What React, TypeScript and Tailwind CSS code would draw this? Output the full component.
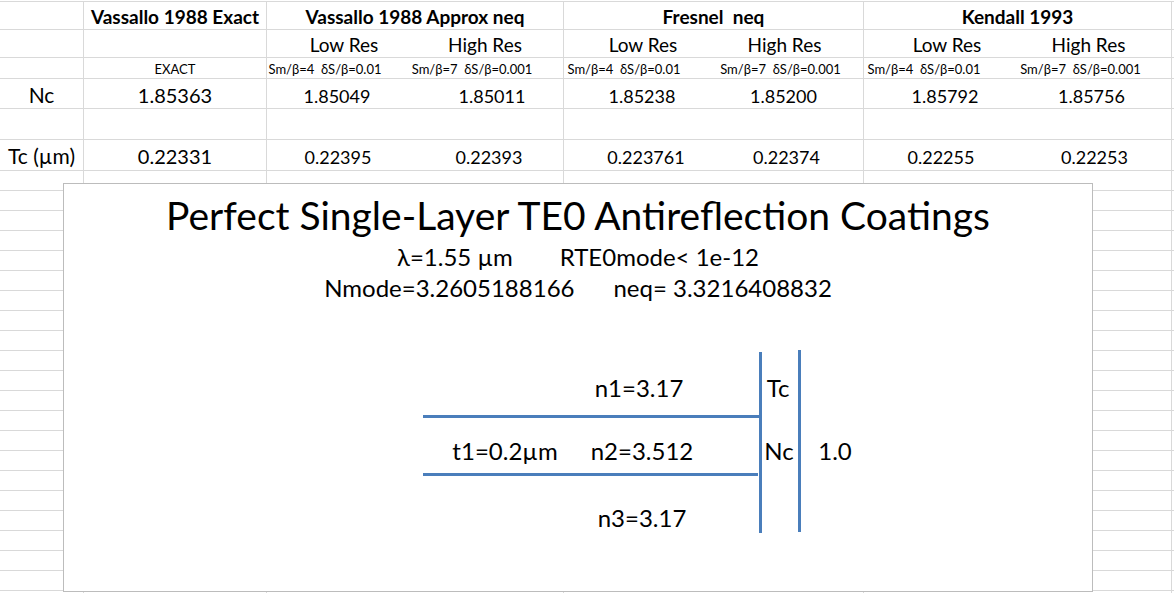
import React from 'react';

const line = 'border-[#d9d9d9]';

// widths of the sheet columns: label, exact, three method groups, sliver at the right edge
const colW = ['w-[84px]', 'w-[183px]', 'w-[297px]', 'w-[300px]', 'w-[308px]', 'w-[2px]'];
const halfW = [
  ['w-[148px]', 'w-[148px]'],
  ['w-[150px]', 'w-[149px]'],
  ['w-[154px]', 'w-[153px]'],
];

type Pair = [React.ReactNode, React.ReactNode, string?, string?];

const Row = ({
  h,
  pb = '',
  text = '',
  label,
  exact,
  groups,
  top = false,
}: {
  h: string;
  pb?: string;
  text?: string;
  label?: React.ReactNode;
  exact?: React.ReactNode;
  groups?: (Pair | React.ReactNode)[];
  top?: boolean;
}) => (
  <div className={`flex shrink-0 border-b ${line} ${h} ${top ? 'border-t' : ''} ${text}`}>
    <div className={`${colW[0]} shrink-0 border-r ${line} flex items-end justify-center ${pb}`}>{label}</div>
    <div className={`${colW[1]} shrink-0 border-r ${line} flex items-end justify-center ${pb}`}>{exact}</div>
    {[0, 1, 2].map((g) => {
      const item = groups?.[g];
      return (
        <div key={g} className={`${colW[g + 2]} shrink-0 border-r ${line} flex items-end`}>
          {Array.isArray(item) ? (
            <>
              <div className={`${halfW[g][0]} shrink-0 flex justify-center ${pb} ${item[2] ?? ''}`}>{item[0]}</div>
              <div className={`${halfW[g][1]} shrink-0 flex justify-center ${pb} ${item[3] ?? ''}`}>{item[1]}</div>
            </>
          ) : (
            <div className={`w-full flex justify-center ${pb}`}>{item}</div>
          )}
        </div>
      );
    })}
    <div className={`${colW[5]} shrink-0`} />
  </div>
);

const low = 'Sm/β=4  δS/β=0.01';
const high = 'Sm/β=7  δS/β=0.001';

export default function App() {
  return (
    <div className="relative w-[1174px] h-[593px] overflow-hidden bg-white text-black font-['Lato',sans-serif]">
      <div className="flex flex-col pt-px">
        <Row
          top
          h="h-[29px]"
          pb="pb-[3px]"
          text="text-[19px] leading-[19px] font-bold"
          exact="Vassallo 1988 Exact"
          groups={['Vassallo 1988 Approx neq', <span className="whitespace-pre">Fresnel  neq</span>, 'Kendall 1993']}
        />
        <Row
          h="h-[28px]"
          pb="pb-[3px]"
          text="text-[19px] leading-[19px]"
          groups={[
            ['Low Res', 'High Res', 'pl-[6px]', 'pr-[8px]'],
            ['Low Res', 'High Res', 'pl-[8px]', 'pr-[8px]'],
            ['Low Res', 'High Res', 'pl-[12px]', 'pr-[12px]'],
          ]}
        />
        <Row
          h="h-[21px]"
          pb="pb-[2px]"
          text="text-[13px] leading-[13px] whitespace-pre"
          exact="EXACT"
          groups={[
            [low, high, 'pr-[32px]', 'pr-[34px]'],
            [low, high, 'pr-[30px]', 'pr-[16px]'],
            [low, high, 'pr-[34px]', 'pr-[28px]'],
          ]}
        />
        <Row
          h="h-[30px]"
          pb="pb-[3px]"
          text="text-[18px] leading-[18px]"
          label={<span className="text-[21px] leading-[21px]">Nc</span>}
          exact={<span className="text-[20px] leading-[20px]">1.85363</span>}
          groups={[
            ['1.85049', '1.85011', 'pr-[8px]', 'pl-[6px]'],
            ['1.85238', '1.85200', 'pl-[6px]', 'pr-[10px]'],
            ['1.85792', '1.85756', 'pl-[8px]', 'pr-[6px]'],
          ]}
        />
        <Row h="h-[31px]" />
        <Row
          h="h-[31px]"
          pb="pb-[4px]"
          text="text-[18px] leading-[18px]"
          label={<span className="text-[21px] leading-[21px]">Tc (µm)</span>}
          exact={<span className="text-[20px] leading-[20px]">0.22331</span>}
          groups={[
            ['0.22395', '0.22393', 'pr-[6px]', ''],
            ['0.223761', '0.22374', 'pl-[14px]', 'pr-[4px]'],
            ['0.22255', '0.22253', '', ''],
          ]}
        />
        {Array.from({ length: 22 }).map((_, i) => (
          <Row key={i} h="h-[20px]" />
        ))}
      </div>

      {/* text box with the coating sketch, floating over the sheet */}
      <div className="absolute left-[63px] top-[183px] w-[1030px] h-[409px] border border-[#bcbcbc] bg-white">
        <div className="flex flex-col items-center pt-[12px]">
          <div className="text-[39px] leading-[39px]">Perfect Single-Layer TE0 Antireflection Coatings</div>
          <div className="mt-[10px] flex gap-[47px] text-[24px] leading-[24px]">
            <span>λ=1.55 µm</span>
            <span>RTE0mode&lt; 1e-12</span>
          </div>
          <div className="mt-[7px] flex gap-[39px] text-[24px] leading-[24px]">
            <span>Nmode=3.2605188166</span>
            <span>neq= 3.3216408832</span>
          </div>
        </div>

        {/* layer boundaries */}
        <div className="absolute left-[359px] top-[231px] w-[336px] h-[3px] bg-[#4a7ebb]" />
        <div className="absolute left-[359px] top-[289px] w-[335px] h-[3px] bg-[#4a7ebb]" />
        <div className="absolute left-[695px] top-[168px] w-[3px] h-[181px] bg-[#4a7ebb]" />
        <div className="absolute left-[734px] top-[166px] w-[3px] h-[182px] bg-[#4a7ebb]" />

        <div className="text-[24px] leading-[24px] whitespace-nowrap">
          <span className="absolute left-[575px] top-[192px] -translate-x-1/2">n1=3.17</span>
          <span className="absolute left-[714px] top-[192px] -translate-x-1/2">Tc</span>
          <span className="absolute left-[441px] top-[255px] -translate-x-1/2">t1=0.2µm</span>
          <span className="absolute left-[578px] top-[255px] -translate-x-1/2">n2=3.512</span>
          <span className="absolute left-[715px] top-[255px] -translate-x-1/2">Nc</span>
          <span className="absolute left-[771px] top-[255px] -translate-x-1/2">1.0</span>
          <span className="absolute left-[578px] top-[322px] -translate-x-1/2">n3=3.17</span>
        </div>
      </div>
    </div>
  );
}
